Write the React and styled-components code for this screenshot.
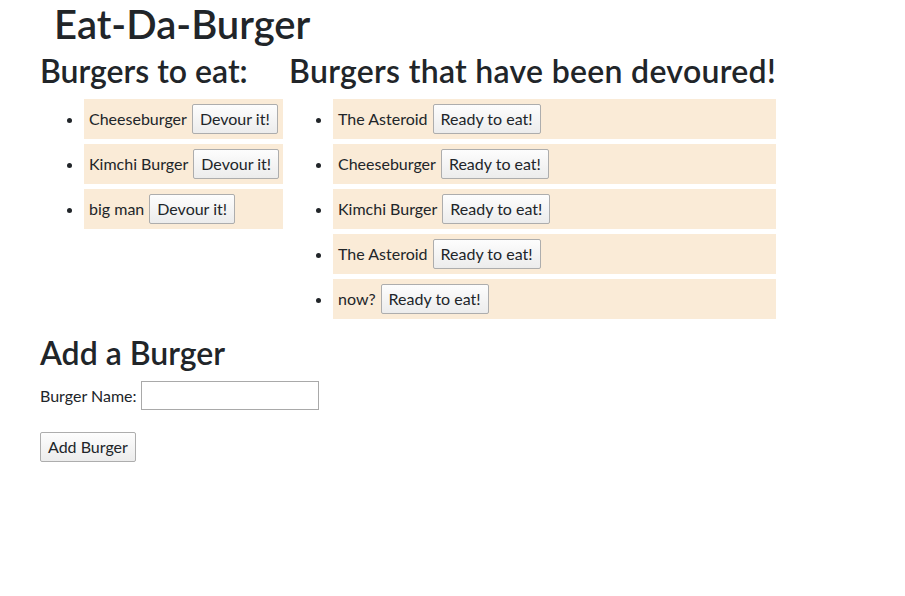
import React from 'react';
import styled, { createGlobalStyle } from 'styled-components';

const GlobalStyle = createGlobalStyle`
  * { box-sizing: border-box; }
  body {
    margin: 0;
    background: #fff;
    color: #212529;
    font-family: Lato, "Open Sans", sans-serif;
    font-size: 16px;
    line-height: 1.2;
  }
`;

const Page = styled.div`
  padding: 0 40px;
`;

const Title = styled.h1`
  margin: 0 0 4px;
  padding-left: 14px;
  font-size: 40px;
  font-weight: 600;
  line-height: 48px;
`;

const Columns = styled.div`
  display: grid;
  grid-template-columns: 243px 487px;
  column-gap: 6px;
  align-items: start;
`;

const Heading = styled.h2`
  margin: 0 0 9px;
  font-size: 32px;
  font-weight: 600;
  line-height: 38px;
  white-space: nowrap;
  letter-spacing: ${({ $spacing }) => $spacing || 0}px;
`;

const List = styled.ul`
  margin: 0;
  padding-left: 44px;
`;

const Item = styled.li`
  background: #faebd7;
  padding: 5px;
  & + & { margin-top: 5px; }
`;

const ItemBody = styled.div`
  display: flex;
  align-items: center;
  gap: 5px;
  white-space: nowrap;
`;

const Button = styled.button`
  height: 30px;
  padding: 0 7px 2px;
  font-family: inherit;
  font-size: 16px;
  color: #212529;
  white-space: nowrap;
  background: linear-gradient(#fdfdfd, #ececec);
  border: 1px solid #adadad;
  border-radius: 2px;
  cursor: pointer;
`;

const AddHeading = styled(Heading)`
  margin-top: 15px;
`;

const FormRow = styled.div`
  display: flex;
  align-items: center;
  gap: 4px;
  height: 29px;
`;

const Input = styled.input`
  width: 178px;
  height: 29px;
  border: 1px solid #a9a9a9;
  font-family: inherit;
  font-size: 16px;
  padding: 2px 4px;
`;

const SubmitRow = styled.div`
  margin-top: 22px;
`;

const toEat = ['Cheeseburger', 'Kimchi Burger', 'big man'];
const devoured = ['The Asteroid', 'Cheeseburger', 'Kimchi Burger', 'The Asteroid', 'now?'];

const BurgerList = ({ items, action }) => (
  <List>
    {items.map((name, i) => (
      <Item key={i}>
        <ItemBody>
          <span>{name}</span>
          <Button type="button">{action}</Button>
        </ItemBody>
      </Item>
    ))}
  </List>
);

export default function App() {
  return (
    <Page>
      <GlobalStyle />
      <Title>Eat-Da-Burger</Title>
      <Columns>
        <div>
          <Heading>Burgers to eat:</Heading>
          <BurgerList items={toEat} action="Devour it!" />
        </div>
        <div>
          <Heading $spacing={0.3}>Burgers that have been devoured!</Heading>
          <BurgerList items={devoured} action="Ready to eat!" />
        </div>
      </Columns>
      <AddHeading>Add a Burger</AddHeading>
      <form onSubmit={(e) => e.preventDefault()}>
        <FormRow>
          <label htmlFor="burger">Burger Name:</label>
          <Input id="burger" type="text" />
        </FormRow>
        <SubmitRow>
          <Button type="submit">Add Burger</Button>
        </SubmitRow>
      </form>
    </Page>
  );
}
